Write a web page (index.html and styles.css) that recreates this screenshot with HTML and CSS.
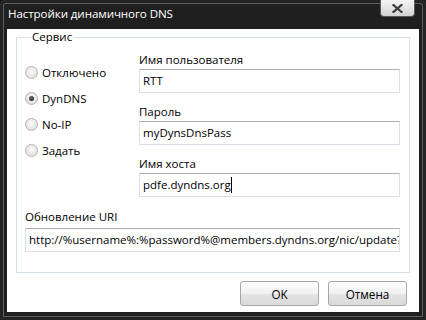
FILE: index.html
```html
<!DOCTYPE html>
<html lang="ru">
<head>
<meta charset="utf-8">
<title>Настройки динамичного DNS</title>
<link rel="stylesheet" href="styles.css">
</head>
<body>
<div class="window">
  <div class="titlebar">
    <span class="title">Настройки динамичного DNS</span>
    <button class="close" aria-label="Закрыть">
      <svg width="11" height="9" viewBox="0 0 11 9"><path d="M1.5 1 L9.5 8 M9.5 1 L1.5 8" stroke="#3c3c3c" stroke-width="2.2" stroke-linecap="square" fill="none"/></svg>
    </button>
  </div>
  <div class="client">
    <fieldset class="group">
      <legend>Сервис</legend>
      <div class="cols">
        <div class="radios">
          <label class="radio-row"><span class="radio"></span>Отключено</label>
          <label class="radio-row"><span class="radio checked"></span>DynDNS</label>
          <label class="radio-row"><span class="radio"></span>No-IP</label>
          <label class="radio-row"><span class="radio"></span>Задать</label>
        </div>
        <div class="fields">
          <div class="field">
            <div class="label">Имя пользователя</div>
            <div class="textbox">RTT</div>
          </div>
          <div class="field">
            <div class="label">Пароль</div>
            <div class="textbox">myDynsDnsPass</div>
          </div>
          <div class="field">
            <div class="label">Имя хоста</div>
            <div class="textbox">pdfe.dyndns.org<span class="caret"></span></div>
          </div>
        </div>
      </div>
      <div class="field uri">
        <div class="label">Обновление URI</div>
        <div class="textbox">http://%username%:%password%@members.dyndns.org/nic/update?hostname=%host%&amp;myip=%ip%</div>
      </div>
    </fieldset>
    <div class="buttons">
      <button class="btn">OK</button>
      <button class="btn">Отмена</button>
    </div>
  </div>
</div>
</body>
</html>
```
FILE: styles.css
```css
* { box-sizing: border-box; }
html, body { margin: 0; padding: 0; background: #1c1c1c; }
body {
  width: 426px;
  height: 320px;
  overflow: hidden;
  font-family: "Open Sans", "Noto Sans", sans-serif;
  font-size: 11.5px;
  color: #000;
}
.window {
  width: 426px;
  height: 320px;
  background: #1f1f1f;
  border-radius: 6px 6px 0 0;
  box-shadow: inset 0 0 0 3px #232323, inset 0 0 0 4px #5e5e5e;
  display: flex;
  flex-direction: column;
  padding: 0 7px 8px 7px;
}
.titlebar {
  height: 29px;
  flex: none;
  display: flex;
  align-items: flex-start;
  justify-content: space-between;
}
.title {
  color: #fff;
  font-size: 11.6px;
  letter-spacing: -0.1px;
  line-height: 16px;
  margin: 6px 0 0 1px;
}
.close {
  width: 35px;
  height: 17px;
  margin: 0 4px 0 0;
  padding: 0;
  border: 1px solid #5a5a5a;
  border-top: none;
  border-radius: 0 0 4px 4px;
  background: linear-gradient(#f4f4f4, #e2e2e2 55%, #d2d2d2);
  display: flex;
  align-items: center;
  justify-content: center;
}
.client {
  flex: 1;
  min-height: 0;
  background: #fff;
  padding: 0 9px 6px 9px;
  display: flex;
  flex-direction: column;
}
.group {
  flex: 1;
  min-width: 0;
  min-height: 0;
  margin: 0;
  padding: 7px 9px 0 8px;
  border: 1px solid #d5dfe5;
}
.group legend {
  padding: 0 1px;
  margin-left: 6px;
  line-height: 16px;
  color: #000;
}
.cols {
  display: flex;
  min-width: 0;
}
.radios {
  width: 114px;
  flex: none;
  padding-top: 7px;
  display: flex;
  flex-direction: column;
}
.radio-row {
  height: 26px;
  display: flex;
  align-items: center;
  gap: 4px;
}
.radio {
  width: 13px;
  height: 13px;
  border-radius: 50%;
  border: 1px solid #b4b4b4;
  background: radial-gradient(circle at 50% 40%, #fbfbfb, #e2e2e2 70%, #d4d4d4);
  display: flex;
  align-items: center;
  justify-content: center;
  flex: none;
}
.radio.checked::after {
  content: "";
  width: 5px;
  height: 5px;
  border-radius: 50%;
  background: radial-gradient(circle at 40% 35%, #6a6a6a, #151515);
}
.fields {
  flex: 1;
  min-width: 0;
  display: flex;
  flex-direction: column;
  gap: 11px;
}
.field { min-width: 0; }
.label {
  line-height: 16px;
  margin-bottom: 1px;
}
.textbox {
  height: 24px;
  min-width: 0;
  border: 1px solid #dbdfe6;
  border-top-color: #abadb3;
  padding: 0 3px;
  line-height: 22px;
  white-space: nowrap;
  overflow: hidden;
}
.caret {
  display: inline-block;
  width: 1px;
  height: 16px;
  background: #000;
  vertical-align: -4px;
}
.uri {
  margin-top: 12px;
}
.uri .label { margin-bottom: 3px; }
.buttons {
  flex: none;
  display: flex;
  justify-content: flex-end;
  gap: 9px;
  margin-top: 8px;
  padding-right: 3px;
}
.btn {
  width: 79px;
  height: 25px;
  font-family: inherit;
  font-size: 11.7px;
  color: #000;
  border: 1px solid #a8a8a8;
  border-radius: 3px;
  background: linear-gradient(#fdfdfd, #f1f1f1 50%, #e4e4e4 51%, #dadada);
  padding: 0;
}
```
